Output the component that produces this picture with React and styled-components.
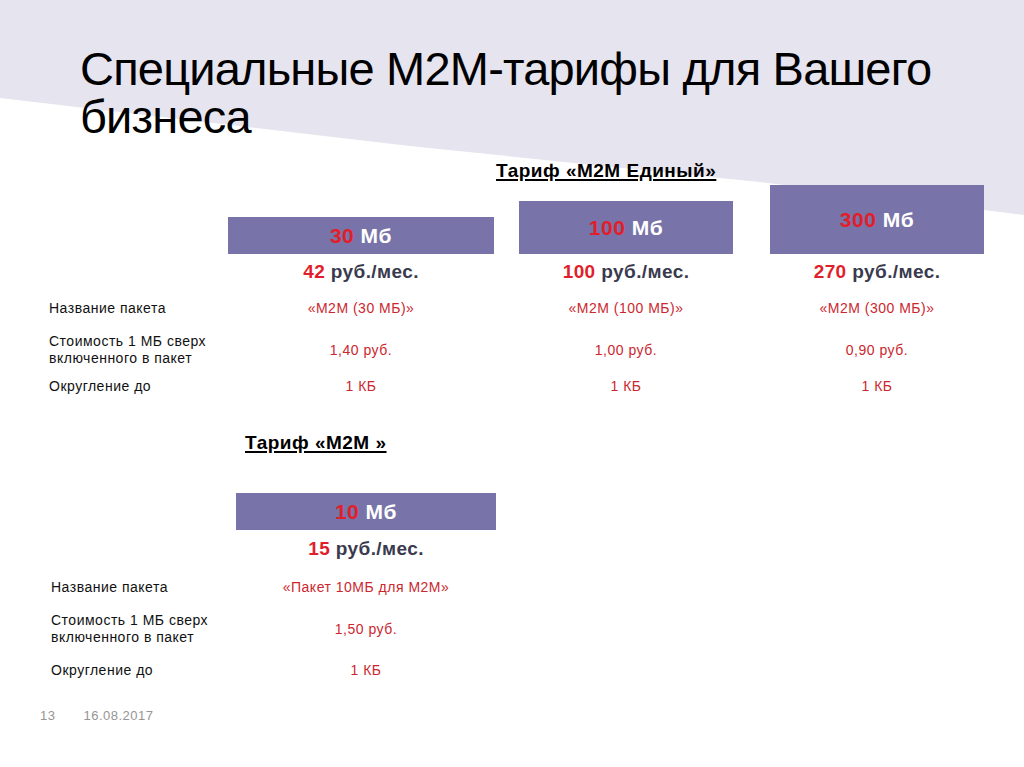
import React from "react";
import styled, { createGlobalStyle } from "styled-components";

const Global = createGlobalStyle`
  html, body { margin: 0; padding: 0; background: #fff; }
  body { font-family: "Liberation Sans", Arial, sans-serif; }
`;

const Slide = styled.div`
  position: relative;
  width: 1024px;
  height: 767px;
  overflow: hidden;
  background: #fff;
  &::before {
    content: "";
    position: absolute;
    inset: 0;
    background: #e6e4ee;
    clip-path: polygon(0 0, 100% 0, 100% 215px, 75% 183px, 40% 146px, 0 98px);
  }
`;

const Content = styled.div`
  position: relative;
  display: flex;
  flex-direction: column;
`;

const Title = styled.h1`
  margin: 0;
  padding: 45px 0 0 80px;
  font-size: 47px;
  line-height: 48px;
  letter-spacing: -0.8px;
  font-weight: 400;
  color: #000;
`;

const Heading = styled.div`
  margin-top: ${(p) => p.$top}px;
  margin-left: ${(p) => p.$left}px;
  font-size: 19px;
  line-height: 20px;
  letter-spacing: 0.5px;
  font-weight: 700;
  color: #000;
  text-decoration: underline;
  text-underline-offset: 2px;
  text-decoration-thickness: 1.5px;
`;

const Table = styled.div`
  display: flex;
  align-items: flex-end;
  margin-top: ${(p) => p.$top}px;
`;

const Column = styled.div`
  display: flex;
  flex-direction: column;
  width: ${(p) => p.$w}px;
  margin-left: ${(p) => p.$ml}px;
`;

const Box = styled.div`
  height: ${(p) => p.$h}px;
  background: #7873a8;
  display: flex;
  align-items: center;
  justify-content: center;
  font-size: 21px;
  letter-spacing: 0.5px;
  font-weight: 700;
  color: #fff;
`;

const Red = styled.span`
  color: #e11f2b;
`;

const Cell = styled.div`
  height: ${(p) => p.$h}px;
  display: flex;
  align-items: center;
  justify-content: ${(p) => (p.$label ? "flex-start" : "center")};
`;

const Price = styled.span`
  font-size: 19px;
  letter-spacing: 0.4px;
  font-weight: 700;
  color: #393a4e;
`;

const Label = styled.span`
  font-size: 14px;
  line-height: 17px;
  letter-spacing: 0.5px;
  color: #111;
`;

const Value = styled.span`
  font-size: 14px;
  letter-spacing: 0.5px;
  color: #cc272e;
`;

const Footer = styled.div`
  display: flex;
  margin-top: ${(p) => p.$top}px;
  padding-left: 40px;
  gap: 28px;
  font-size: 13px;
  line-height: 14px;
  letter-spacing: 0.5px;
  color: #959595;
`;

const rows1 = { price: 35, name: 38, cost: 45, round: 28 };
const rows2 = { price: 38, name: 38, cost: 46, round: 36 };

function LabelColumn({ w, ml, rows }) {
  return (
    <Column $w={w} $ml={ml}>
      <Cell $h={rows.price} $label />
      <Cell $h={rows.name} $label>
        <Label>Название пакета</Label>
      </Cell>
      <Cell $h={rows.cost} $label>
        <Label>
          Стоимость 1 МБ сверх
          <br />
          включенного в пакет
        </Label>
      </Cell>
      <Cell $h={rows.round} $label>
        <Label>Округление до</Label>
      </Cell>
    </Column>
  );
}

function TariffColumn({ w, ml, boxH, mb, price, name, cost, rows }) {
  return (
    <Column $w={w} $ml={ml}>
      <Box $h={boxH}>
        <span>
          <Red>{mb}</Red> Мб
        </span>
      </Box>
      <Cell $h={rows.price}>
        <Price>
          <Red>{price}</Red> руб./мес.
        </Price>
      </Cell>
      <Cell $h={rows.name}>
        <Value>{name}</Value>
      </Cell>
      <Cell $h={rows.cost}>
        <Value>{cost}</Value>
      </Cell>
      <Cell $h={rows.round}>
        <Value>1 КБ</Value>
      </Cell>
    </Column>
  );
}

export default function App() {
  return (
    <>
      <Global />
      <Slide>
        <Content>
          <Title>
            Специальные M2M-тарифы для Вашего
            <br />
            бизнеса
          </Title>
          <Heading $top={20} $left={496}>Тариф «M2M Единый»</Heading>
          <Table $top={4}>
            <LabelColumn w={179} ml={49} rows={rows1} />
            <TariffColumn w={266} ml={0} boxH={37} mb="30" price="42" name="«M2M (30 МБ)»" cost="1,40 руб." rows={rows1} />
            <TariffColumn w={214} ml={25} boxH={53} mb="100" price="100" name="«M2M (100 МБ)»" cost="1,00 руб." rows={rows1} />
            <TariffColumn w={214} ml={37} boxH={69} mb="300" price="270" name="«M2M (300 МБ)»" cost="0,90 руб." rows={rows1} />
          </Table>
          <Heading $top={33} $left={245}>Тариф «M2M »</Heading>
          <Table $top={40}>
            <LabelColumn w={185} ml={51} rows={rows2} />
            <TariffColumn w={260} ml={0} boxH={37} mb="10" price="15" name="«Пакет 10МБ для M2M»" cost="1,50 руб." rows={rows2} />
          </Table>
          <Footer $top={21}>
            <span>13</span>
            <span>16.08.2017</span>
          </Footer>
        </Content>
      </Slide>
    </>
  );
}
